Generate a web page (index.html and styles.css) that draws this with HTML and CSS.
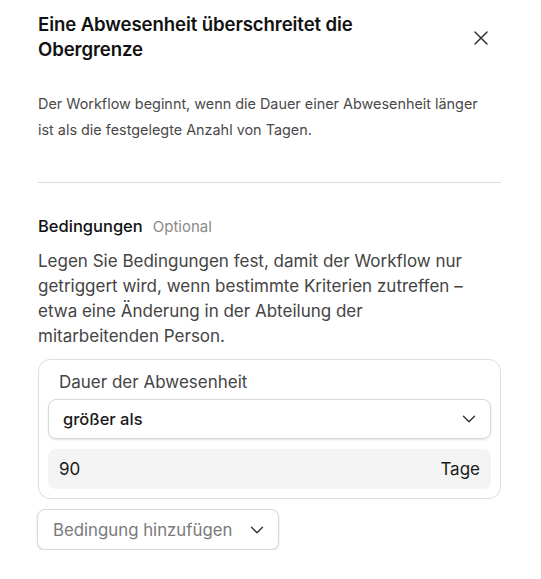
FILE: index.html
```html
<!DOCTYPE html>
<html lang="de">
<head>
<meta charset="utf-8">
<link rel="stylesheet" href="styles.css">
</head>
<body>
<div class="panel">
  <header class="head">
    <h1 class="title">Eine Abwesenheit überschreitet die Obergrenze</h1>
    <button class="close" aria-label="Schließen">
      <svg width="14" height="14" viewBox="0 0 14 14"><path d="M1 1L13 13M13 1L1 13" stroke="#333" stroke-width="1.5" fill="none" stroke-linecap="round"/></svg>
    </button>
  </header>
  <p class="desc">Der Workflow beginnt, wenn die Dauer einer Abwesenheit länger ist als die festgelegte Anzahl von Tagen.</p>
  <hr class="divider">
  <div class="section-title"><span class="label">Bedingungen</span><span class="optional">Optional</span></div>
  <p class="intro">Legen Sie Bedingungen fest, damit der Workflow nur getriggert wird, wenn bestimmte Kriterien zutreffen – etwa eine Änderung in der Abteilung der mitarbeitenden Person.</p>
  <div class="card">
    <div class="card-label">Dauer der Abwesenheit</div>
    <div class="select">
      <span>größer als</span>
      <svg class="chev" width="14" height="8" viewBox="0 0 14 8"><path d="M1.5 1.2L7 6.7L12.5 1.2" stroke="#333" stroke-width="1.4" fill="none" stroke-linecap="round" stroke-linejoin="round"/></svg>
    </div>
    <div class="input">
      <span>90</span>
      <span>Tage</span>
    </div>
  </div>
  <button class="add">
    <span>Bedingung hinzufügen</span>
    <svg class="chev" width="14" height="8" viewBox="0 0 14 8"><path d="M1.5 1.2L7 6.7L12.5 1.2" stroke="#333" stroke-width="1.4" fill="none" stroke-linecap="round" stroke-linejoin="round"/></svg>
  </button>
</div>
</body>
</html>
```
FILE: styles.css
```css
html, body {
  margin: 0;
  padding: 0;
  background: #fff;
}
body {
  font-family: Inter, "Noto Sans", sans-serif;
  color: #222;
}
.panel {
  padding: 12px 40px 0 38px;
}
.head {
  display: flex;
  align-items: center;
  justify-content: space-between;
}
.title {
  margin: 0;
  font-size: 18.6px;
  line-height: 25px;
  font-weight: 600;
  color: #111;
  letter-spacing: -0.1px;
  max-width: 360px;
}
.close {
  border: 0;
  background: none;
  padding: 0;
  width: 14px;
  height: 14px;
  margin-right: 13px;
  margin-top: 2px;
  display: flex;
}
.desc {
  margin: 29px 0 0;
  max-width: 448px;
  font-size: 14.4px;
  line-height: 26px;
  color: #4a4a4a;
}
.divider {
  margin: 39px 0 0;
  border: 0;
  border-top: 1px solid #dcdcdc;
}
.section-title {
  margin-top: 33px;
  display: flex;
  align-items: baseline;
  gap: 10px;
  line-height: 20px;
}
.label {
  font-size: 16.5px;
  font-weight: 500;
  color: #111;
}
.optional {
  font-size: 15px;
  color: #8a8a8a;
}
.intro {
  margin: 12px 0 0;
  max-width: 440px;
  font-size: 17px;
  line-height: 25px;
  color: #444;
}
.card {
  margin-top: 10px;
  border: 1px solid #dedede;
  border-radius: 12px;
  padding: 10px 9px 9px;
  display: flex;
  flex-direction: column;
}
.card-label {
  font-size: 17px;
  line-height: 24px;
  color: #444;
  padding-left: 11px;
  margin-bottom: 5px;
}
.select {
  height: 40px;
  box-sizing: border-box;
  border: 1px solid #d8d8d8;
  border-radius: 8px;
  box-shadow: 0 1px 2px rgba(0,0,0,0.12);
  display: flex;
  align-items: center;
  justify-content: space-between;
  padding: 0 14px 0 14px;
  font-size: 16.5px;
  font-weight: 500;
  color: #1a1a1a;
}
.input {
  margin-top: 10px;
  height: 40px;
  box-sizing: border-box;
  background: #f4f4f4;
  border-radius: 8px;
  display: flex;
  align-items: center;
  justify-content: space-between;
  padding: 0 11px;
  font-size: 17px;
  color: #1a1a1a;
}
.add {
  margin-top: 10px;
  margin-left: -1px;
  height: 41px;
  box-sizing: border-box;
  border: 1px solid #d8d8d8;
  border-radius: 8px;
  background: #fff;
  box-shadow: 0 1px 2px rgba(0,0,0,0.12);
  display: flex;
  align-items: center;
  gap: 18px;
  padding: 0 14px 0 15px;
  font-family: Inter, "Noto Sans", sans-serif;
  font-size: 16.8px;
  color: #7a7a7a;
}
.chev {
  display: block;
}
```
